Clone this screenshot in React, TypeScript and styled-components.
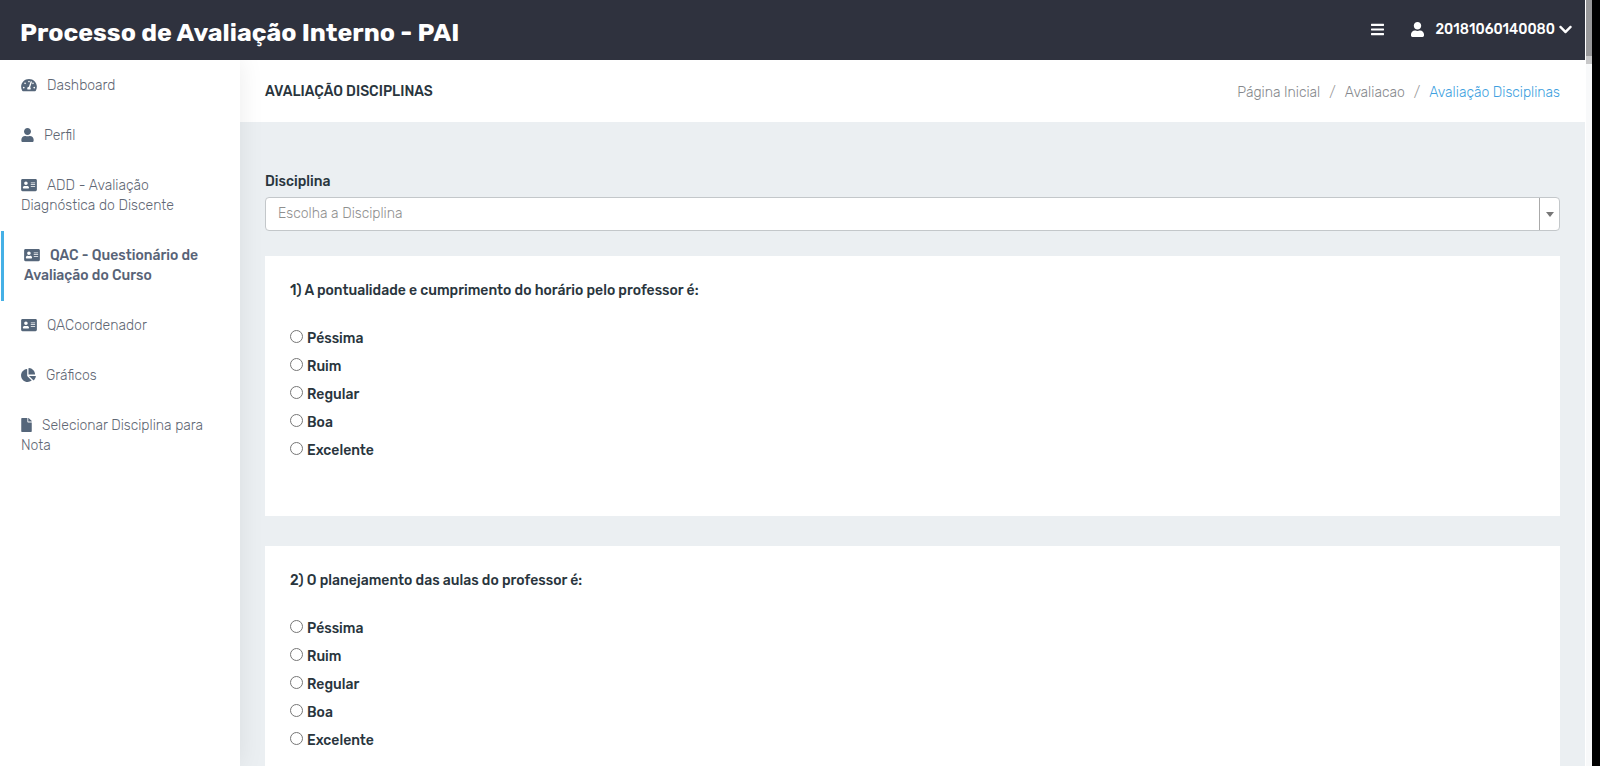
import React, { useState } from "react";
import styled, { createGlobalStyle } from "styled-components";
import {
  FaAddressCard,
  FaBars,
  FaChartPie,
  FaChevronDown,
  FaFile,
  FaTachometerAlt,
  FaUser,
} from "react-icons/fa";
import type { IconType } from "react-icons";

const GlobalStyle = createGlobalStyle`
  *, *::before, *::after { box-sizing: border-box; }
  body {
    margin: 0;
    background: #ebeff2;
    color: #29353d;
    font-family: Rubik, Roboto, "Liberation Sans", sans-serif;
    font-size: 14px;
    line-height: 20px;
  }
  button, input { font: inherit; }
`;

const Window = styled.div`
  display: flex;
  height: 100vh;
  background: #000;
  padding-right: 8px;
`;

const Page = styled.div`
  flex: 1;
  min-width: 0;
  display: flex;
  flex-direction: column;
  background: #ebeff2;
`;

const ScrollTrack = styled.div`
  flex: none;
  width: 7px;
  background: #f8f9fa;
  border-left: 1px solid #fff;
`;

const ScrollThumb = styled.div`
  height: 64px;
  background: #98989a;
  border-bottom: 8px solid #c8c8c9;
`;

const Header = styled.header`
  position: relative;
  z-index: 2;
  flex: none;
  height: 60px;
  padding: 0 13px 0 20px;
  display: flex;
  justify-content: space-between;
  background: #2f323e;
  color: #fff;
`;

const Brand = styled.a`
  color: inherit;
  text-decoration: none;
  font-size: 25px;
  font-weight: 700;
  line-height: 66px;
`;

const HeaderActions = styled.div`
  display: flex;
  align-items: center;
  gap: 27px;
  height: 58px;
`;

const HeaderButton = styled.button`
  display: flex;
  align-items: center;
  padding: 0;
  border: 0;
  background: none;
  color: inherit;
  font-weight: 500;
  cursor: pointer;
  svg { height: 15px; width: 13px; }
`;

const UserName = styled.span`
  margin: 0 4px 0 11px;
  padding-top: 2px;
`;

const Body = styled.div`
  flex: 1;
  min-height: 0;
  display: flex;
`;

const Sidebar = styled.nav`
  position: relative;
  z-index: 1;
  flex: none;
  width: 240px;
  padding: 1px 0 0 1px;
  background: #fff;
  box-shadow: 0 0 24px rgba(0, 0, 0, 0.08);
`;

const NavList = styled.ul`
  margin: 0;
  padding: 0;
  list-style: none;
`;

const NavLink = styled.a<{ $active?: boolean; $iconWidth: number }>`
  display: block;
  padding: 15px 20px;
  border-left: ${(p) => (p.$active ? "3px solid #45b0e6" : "0")};
  color: ${(p) => (p.$active ? "#586377" : "#5f6774")};
  font-weight: ${(p) => (p.$active ? 500 : 300)};
  text-decoration: none;
  svg {
    height: 14px;
    width: ${(p) => p.$iconWidth}px;
    margin-right: 10px;
    vertical-align: -2px;
    color: #55667a;
  }
`;

const Main = styled.main`
  flex: 1;
  min-width: 0;
  overflow-y: auto;
  scrollbar-width: none;
`;

const TitleBar = styled.div`
  display: flex;
  align-items: center;
  justify-content: space-between;
  height: 62px;
  padding: 2px 25px 0;
  background: #fff;
`;

const PageTitle = styled.h1`
  margin: 0;
  font-size: 14px;
  font-weight: 500;
  text-transform: uppercase;
`;

const Breadcrumb = styled.ol`
  display: flex;
  margin: 0;
  padding: 2px 0 0;
  list-style: none;
  font-weight: 300;
  li + li::before {
    content: "/";
    padding: 0 9px;
    color: #999;
  }
`;

const Crumb = styled.a<{ $current?: boolean }>`
  color: ${(p) => (p.$current ? "#3e9fe0" : "#85888c")};
  text-decoration: none;
`;

const Form = styled.form`
  padding: 50px 25px 30px;
`;

const FieldLabel = styled.label`
  display: block;
  margin-bottom: 5px;
  font-weight: 500;
`;

const Combo = styled.div`
  display: flex;
  height: 34px;
  margin-bottom: 25px;
  border: 1px solid #c3c7ca;
  border-radius: 4px;
  background: #fff;
  overflow: hidden;
`;

const ComboInput = styled.input`
  flex: 1;
  min-width: 0;
  padding: 0 12px;
  border: 0;
  outline: 0;
  background: none;
  font-weight: 300;
  &::placeholder { color: #8f8f8f; opacity: 1; }
`;

const ComboToggle = styled.button`
  display: flex;
  align-items: center;
  justify-content: center;
  width: 20px;
  padding: 0;
  border: 0;
  border-left: 1px solid #aaa;
  background: none;
  &::before {
    content: "";
    border: 4px solid transparent;
    border-top: 5px solid #777;
    border-bottom: 0;
  }
`;

const Card = styled.fieldset`
  min-width: 0;
  min-height: 260px;
  margin: 0 0 30px;
  padding: 25px;
  border: 0;
  background: #fff;
`;

const Question = styled.legend`
  float: left;
  width: 100%;
  padding: 0;
  margin-bottom: 28px;
  font-weight: 500;
`;

const Options = styled.div`
  clear: both;
  display: flex;
  flex-direction: column;
  align-items: flex-start;
  gap: 8px;
`;

const Option = styled.label`
  display: flex;
  gap: 4px;
  font-weight: 500;
`;

const Radio = styled.input`
  width: 13px;
  height: 13px;
  margin: 1px 0 0;
`;

interface NavEntry {
  icon: IconType;
  iconWidth: number;
  label: string;
  active?: boolean;
}

const navEntries: NavEntry[] = [
  { icon: FaTachometerAlt, iconWidth: 16, label: "Dashboard" },
  { icon: FaUser, iconWidth: 13, label: "Perfil" },
  { icon: FaAddressCard, iconWidth: 16, label: "ADD - Avaliação Diagnóstica do Discente" },
  { icon: FaAddressCard, iconWidth: 16, label: "QAC - Questionário de Avaliação do Curso", active: true },
  { icon: FaAddressCard, iconWidth: 16, label: "QACoordenador" },
  { icon: FaChartPie, iconWidth: 15, label: "Gráficos" },
  { icon: FaFile, iconWidth: 11, label: "Selecionar Disciplina para Nota" },
];

const questions = [
  "1) A pontualidade e cumprimento do horário pelo professor é:",
  "2) O planejamento das aulas do professor é:",
];

const grades = ["Péssima", "Ruim", "Regular", "Boa", "Excelente"];

function QuestionCard({ text, name }: { text: string; name: string }) {
  return (
    <Card>
      <Question>{text}</Question>
      <Options>
        {grades.map((grade) => (
          <Option key={grade}>
            <Radio type="radio" name={name} value={grade} />
            {grade}
          </Option>
        ))}
      </Options>
    </Card>
  );
}

export default function App() {
  const [subject, setSubject] = useState("");

  return (
    <Window>
      <GlobalStyle />
      <Page>
        <Header>
          <Brand href="#">Processo de Avaliação Interno - PAI</Brand>
          <HeaderActions>
            <HeaderButton type="button" aria-label="Menu">
              <FaBars />
            </HeaderButton>
            <HeaderButton type="button">
              <FaUser />
              <UserName>20181060140080</UserName>
              <FaChevronDown />
            </HeaderButton>
          </HeaderActions>
        </Header>
        <Body>
          <Sidebar>
            <NavList>
              {navEntries.map(({ icon: Icon, iconWidth, label, active }) => (
                <li key={label}>
                  <NavLink href="#" $active={active} $iconWidth={iconWidth}>
                    <Icon />
                    {label}
                  </NavLink>
                </li>
              ))}
            </NavList>
          </Sidebar>
          <Main>
            <TitleBar>
              <PageTitle>Avaliação Disciplinas</PageTitle>
              <Breadcrumb>
                <li><Crumb href="#">Página Inicial</Crumb></li>
                <li><Crumb href="#">Avaliacao</Crumb></li>
                <li><Crumb href="#" $current>Avaliação Disciplinas</Crumb></li>
              </Breadcrumb>
            </TitleBar>
            <Form>
              <FieldLabel htmlFor="disciplina">Disciplina</FieldLabel>
              <Combo>
                <ComboInput
                  id="disciplina"
                  placeholder="Escolha a Disciplina"
                  value={subject}
                  onChange={(e) => setSubject(e.target.value)}
                />
                <ComboToggle type="button" aria-label="Abrir lista" />
              </Combo>
              {questions.map((text, i) => (
                <QuestionCard key={text} text={text} name={`q${i + 1}`} />
              ))}
            </Form>
          </Main>
        </Body>
      </Page>
      <ScrollTrack>
        <ScrollThumb />
      </ScrollTrack>
    </Window>
  );
}
